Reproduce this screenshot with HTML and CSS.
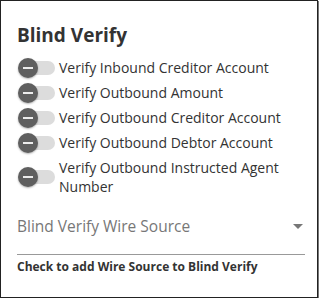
FILE: index.html
```html
<!DOCTYPE html>
<html lang="en">
<head>
  <meta charset="UTF-8" />
  <title>Blind Verify</title>
  <link rel="stylesheet" href="styles.css">
</head>
<body>
  <div class="card">
    <h2 class="title">Blind Verify</h2>

    <ul class="toggles">
      <li><span class="switch"><span class="knob"></span></span><span class="label">Verify Inbound Creditor Account</span></li>
      <li><span class="switch"><span class="knob"></span></span><span class="label">Verify Outbound Amount</span></li>
      <li><span class="switch"><span class="knob"></span></span><span class="label">Verify Outbound Creditor Account</span></li>
      <li><span class="switch"><span class="knob"></span></span><span class="label">Verify Outbound Debtor Account</span></li>
      <li><span class="switch"><span class="knob"></span></span><span class="label">Verify Outbound Instructed Agent Number</span></li>
    </ul>

    <div class="select">
      <span class="placeholder">Blind Verify Wire Source</span>
      <span class="arrow"></span>
    </div>
    <p class="hint">Check to add Wire Source to Blind Verify</p>
  </div>
</body>
</html>
```

FILE: styles.css
```css
body {
  margin: 0;
  font-family: 'Open Sans', sans-serif;
  color: #333;
  background: #fff;
}

.card {
  width: 318px;
  height: 298px;
  box-sizing: border-box;
  border: 1px solid #222;
  box-shadow: 1px 1px 0 #777;
  padding: 21px 12px 0 16px;
}

.title {
  margin: 0 0 7px;
  font-size: 19px;
  font-weight: 700;
  line-height: 26px;
  color: #333;
}

.toggles {
  list-style: none;
  margin: 0;
  padding: 0;
}

.toggles li {
  display: flex;
  align-items: center;
  gap: 4px;
  padding: 3px 0;
}

.switch {
  position: relative;
  flex: none;
  width: 34px;
  height: 14px;
  margin-left: 4px;
  border-radius: 7px;
  background: #dcdcdc;
}

.knob {
  position: absolute;
  left: -3px;
  top: -3px;
  width: 20px;
  height: 20px;
  border-radius: 50%;
  background: #5f5f5f;
  box-shadow: 0 1px 2px rgba(0,0,0,0.3);
}

.knob::after {
  content: '';
  position: absolute;
  left: 5px;
  top: 9px;
  width: 10px;
  height: 2px;
  background: #ececec;
}

.label {
  font-size: 14px;
  line-height: 19px;
}

.select {
  display: flex;
  align-items: center;
  justify-content: space-between;
  margin-top: 17px;
  height: 20px;
  padding-bottom: 18px;
  border-bottom: 1px solid #999;
}

.placeholder {
  font-size: 15.5px;
  color: #777;
}

.arrow {
  width: 0;
  height: 0;
  margin-right: 2px;
  border-left: 5px solid transparent;
  border-right: 5px solid transparent;
  border-top: 5px solid #777;
}

.hint {
  margin: 4px 0 0;
  font-size: 12px;
  line-height: 16px;
  font-weight: 700;
  color: #333;
}
```
